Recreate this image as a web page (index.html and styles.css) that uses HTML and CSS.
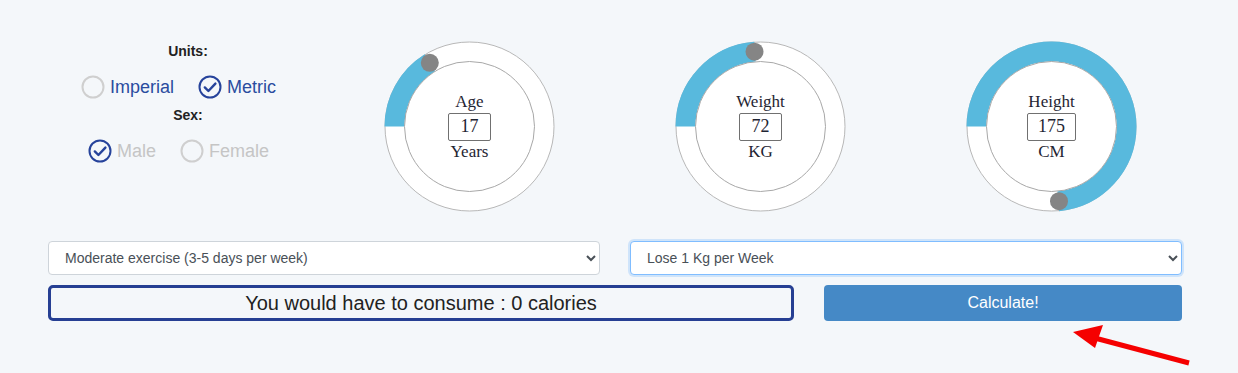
FILE: index.html
```html
<!DOCTYPE html>
<html>
<head>
	<meta charset="utf-8">
	<title>Calorie calculator</title>
	<link rel="stylesheet" href="styles.css">
</head>
<body>
<div class="wrap">
	<div class="top">
		<div class="opts">
			<p class="lbl">Units:</p>
			<div class="radios">
				<span class="radio"><svg class="ico" viewBox="0 0 24 24"><circle cx="12" cy="12" r="10.5" fill="none" stroke="#cfcfcf" stroke-width="2"/></svg>Imperial</span>
				<span class="radio"><svg class="ico" viewBox="0 0 24 24"><circle cx="12" cy="12" r="10.5" fill="none" stroke="#26439b" stroke-width="2"/><path d="M6.8 12.4l3.6 3.6 7-7.4" fill="none" stroke="#26439b" stroke-width="2.4" stroke-linecap="round" stroke-linejoin="round"/></svg>Metric</span>
			</div>
			<p class="lbl">Sex:</p>
			<div class="radios off">
				<span class="radio"><svg class="ico" viewBox="0 0 24 24"><circle cx="12" cy="12" r="10.5" fill="none" stroke="#26439b" stroke-width="2"/><path d="M6.8 12.4l3.6 3.6 7-7.4" fill="none" stroke="#26439b" stroke-width="2.4" stroke-linecap="round" stroke-linejoin="round"/></svg>Male</span>
				<span class="radio"><svg class="ico" viewBox="0 0 24 24"><circle cx="12" cy="12" r="10.5" fill="none" stroke="#cfcfcf" stroke-width="2"/></svg>Female</span>
			</div>
		</div>

		<!-- dial: arc from 9 o'clock, clockwise -->
		<div class="dial">
			<svg viewBox="0 0 171 171" width="171" height="171">
				<circle cx="85.5" cy="85.5" r="84.5" fill="#fff" stroke="#b8b8b8"/>
				<circle cx="85.5" cy="85.5" r="75" fill="none" stroke="#58b9dd" stroke-width="20" stroke-dasharray="76 500" transform="rotate(180 85.5 85.5)"/>
				<circle cx="85.5" cy="85.5" r="65" fill="#fff" stroke="#a8a8a8"/>
				<circle cx="45.8" cy="21.8" r="9" fill="#858585"/>
			</svg>
			<div class="mid">
				<span>Age</span>
				<input class="num" type="text" value="17">
				<span>Years</span>
			</div>
		</div>

		<div class="dial">
			<svg viewBox="0 0 171 171" width="171" height="171">
				<circle cx="85.5" cy="85.5" r="84.5" fill="#fff" stroke="#b8b8b8"/>
				<circle cx="85.5" cy="85.5" r="75" fill="none" stroke="#58b9dd" stroke-width="20" stroke-dasharray="112 500" transform="rotate(180 85.5 85.5)"/>
				<circle cx="85.5" cy="85.5" r="65" fill="#fff" stroke="#a8a8a8"/>
				<circle cx="79.5" cy="10.7" r="9" fill="#858585"/>
			</svg>
			<div class="mid">
				<span>Weight</span>
				<input class="num" type="text" value="72">
				<span>KG</span>
			</div>
		</div>

		<div class="dial">
			<svg viewBox="0 0 171 171" width="171" height="171">
				<circle cx="85.5" cy="85.5" r="84.5" fill="#fff" stroke="#b8b8b8"/>
				<circle cx="85.5" cy="85.5" r="75" fill="none" stroke="#58b9dd" stroke-width="20" stroke-dasharray="346 500" transform="rotate(180 85.5 85.5)"/>
				<circle cx="85.5" cy="85.5" r="65" fill="#fff" stroke="#a8a8a8"/>
				<circle cx="93" cy="160.2" r="9" fill="#858585"/>
			</svg>
			<div class="mid">
				<span>Height</span>
				<input class="num wide" type="text" value="175">
				<span>CM</span>
			</div>
		</div>
	</div>

	<div class="row2">
		<select class="sel">
			<option>Moderate exercise (3-5 days per week)</option>
		</select>
		<select class="sel focus">
			<option>Lose 1 Kg per Week</option>
		</select>
	</div>

	<div class="row3">
		<div class="result">You would have to consume : 0 calories</div>
		<button class="btn" type="button">Calculate!</button>
	</div>
</div>

<svg class="arrow" width="130" height="45" viewBox="0 0 130 45">
	<line x1="124" y1="41" x2="26" y2="15" stroke="#f50000" stroke-width="5"/>
	<polygon points="8,10 38,3 30,26" fill="#f50000"/>
</svg>
</body>
</html>
```

FILE: styles.css
```css
body{
	margin: 0;
	background: #f4f7fa;
	font-family: "Liberation Sans", Arial, sans-serif;
	position: relative;
	height: 373px;
	overflow: hidden;
}
p{
	margin: 0;
}
.wrap{
	width: 1164px;
	margin-left: 33px;
	padding-top: 41px;
}
.top{
	display: grid;
	grid-template-columns: repeat(4, 291px);
}
.opts{
	display: flex;
	flex-direction: column;
	align-items: center;
}
.lbl{
	font-size: 14px;
	font-weight: bold;
	line-height: 20px;
	color: #222;
	padding-left: 19px;
}
.radios{
	display: flex;
	gap: 24px;
	margin: 12px 0 4px;
	font-size: 18px;
	line-height: 28px;
	color: #2a4c9f;
}
.radios.off{
	margin-top: 12px;
	color: #c5c5c5;
}
.radio{
	display: flex;
	align-items: center;
	gap: 5px;
}
.ico{
	width: 24px;
	height: 24px;
}
.dial{
	justify-self: center;
	position: relative;
	width: 171px;
	height: 171px;
}
.dial svg{
	display: block;
}
.mid{
	position: absolute;
	inset: 0;
	display: flex;
	flex-direction: column;
	align-items: center;
	justify-content: center;
	gap: 1px;
	font-family: "Liberation Serif", "Times New Roman", serif;
	font-size: 17px;
	line-height: 20px;
	color: #1f2533;
}
.num{
	width: 43px;
	height: 28px;
	box-sizing: border-box;
	border: 1px solid #707070;
	border-radius: 2px;
	font-family: "Liberation Serif", "Times New Roman", serif;
	font-size: 18px;
	color: #1f2533;
	text-align: center;
	padding: 0;
	outline: none;
}
.num.wide{
	width: 49px;
}
.row2{
	display: grid;
	grid-template-columns: 552px 552px;
	gap: 30px;
	margin: 29px 15px 0;
}
.sel{
	height: 34px;
	padding: 0 12px;
	font-family: "Liberation Sans", Arial, sans-serif;
	font-size: 14px;
	color: #495057;
	background: #fff;
	border: 1px solid #ced4da;
	border-radius: 4px;
	outline: none;
}
.sel.focus{
	border-color: #80bdff;
	box-shadow: 0 0 0 2px rgba(0, 123, 255, 0.15);
}
.row3{
	display: grid;
	grid-template-columns: 746px 358px;
	gap: 30px;
	margin: 10px 15px 0;
}
.result{
	height: 36px;
	box-sizing: border-box;
	border: 3px solid #263f93;
	border-radius: 5px;
	font-size: 20px;
	line-height: 30px;
	text-align: center;
	color: #222;
}
.btn{
	height: 36px;
	border: none;
	border-radius: 4px;
	background: #4589c6;
	color: #fff;
	font-family: "Liberation Sans", Arial, sans-serif;
	font-size: 16px;
}
.arrow{
	position: absolute;
	left: 1065px;
	top: 322px;
}
```
